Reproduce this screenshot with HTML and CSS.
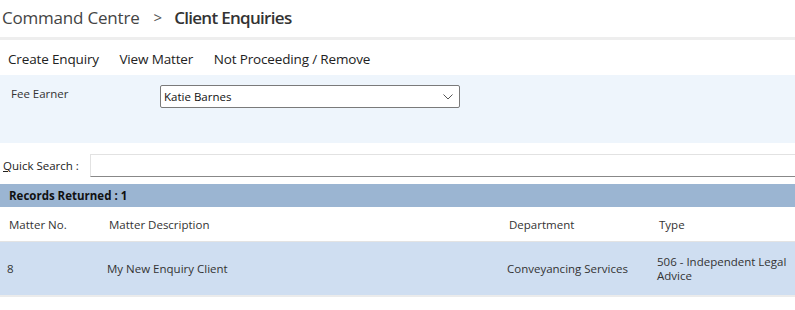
FILE: index.html
```html
<!DOCTYPE html>
<html lang="en">
<head>
    <meta charset="UTF-8">
    <meta name="viewport" content="width=device-width, initial-scale=1.0">
    <title>Client Enquiries</title>
    <link rel="stylesheet" href="styles.css">
</head>
<body>
    <div class="breadcrumb">
        <span class="crumb">Command Centre</span>
        <span class="sep">&gt;</span>
        <span class="current">Client Enquiries</span>
    </div>

    <div class="toolbar">
        <span class="tool">Create Enquiry</span>
        <span class="tool">View Matter</span>
        <span class="tool">Not Proceeding / Remove</span>
    </div>

    <div class="filters">
        <label class="filter-label">Fee Earner</label>
        <div class="select">
            <span>Katie Barnes</span>
            <svg class="chevron" width="10" height="6" viewBox="0 0 10 6">
                <path d="M0.5 0.5 L5 5 L9.5 0.5" fill="none" stroke="#555" stroke-width="1"/>
            </svg>
        </div>
    </div>

    <div class="search">
        <label class="search-label"><u>Q</u>uick Search :</label>
        <div class="search-box"></div>
    </div>

    <div class="records">Records Returned : 1</div>

    <div class="grid">
        <div class="row head">
            <div class="cell">Matter No.</div>
            <div class="cell">Matter Description</div>
            <div class="cell">Department</div>
            <div class="cell">Type</div>
        </div>
        <div class="row item">
            <div class="cell">8</div>
            <div class="cell">My New Enquiry Client</div>
            <div class="cell">Conveyancing Services</div>
            <div class="cell">506 - Independent Legal Advice</div>
        </div>
    </div>
</body>
</html>
```

FILE: styles.css
```css
* {
    margin: 0;
    padding: 0;
    box-sizing: border-box;
}

body {
    font-family: "Open Sans", "Noto Sans", sans-serif;
    color: #333;
    background-color: white;
    width: 795px;
    overflow: hidden;
}

.breadcrumb {
    height: 40px;
    padding-left: 2px;
    padding-bottom: 3px;
    display: flex;
    align-items: center;
    font-size: 17px;
    border-bottom: 3px solid #eeeeee;
}

.crumb {
    color: #444;
    letter-spacing: -0.2px;
}

.sep {
    color: #555;
    margin: 0 12px 0 14px;
    font-size: 15px;
}

.current {
    font-weight: 600;
    color: #333;
    letter-spacing: -0.7px;
}

.toolbar {
    height: 35px;
    display: flex;
    align-items: center;
    gap: 20.5px;
    padding-left: 8px;
    padding-top: 3px;
    font-size: 13.5px;
    letter-spacing: -0.15px;
    color: #222;
}

.filters {
    height: 68px;
    background-color: #eef5fc;
    display: flex;
    align-items: flex-start;
    padding-top: 10px;
}

.filter-label {
    width: 160px;
    padding-left: 11px;
    font-size: 11.5px;
    padding-top: 1px;
}

.select {
    width: 300px;
    height: 23px;
    background-color: white;
    border: 1px solid #7a7a7a;
    border-radius: 2px;
    display: flex;
    align-items: center;
    justify-content: space-between;
    padding: 0 6px 0 3px;
    font-size: 11.5px;
    color: #111;
}

.search {
    display: flex;
    align-items: center;
    padding: 11px 0 7px 0;
    height: 41px;
}

.search-label {
    width: 90px;
    padding-left: 3px;
    font-size: 11.5px;
    color: #222;
}

.search-box {
    flex: 1;
    height: 23px;
    border: 1px solid #e2e2e2;
    border-bottom: 1px solid #888;
    border-right: none;
}

.records {
    height: 23px;
    background-color: #9bb5d2;
    font-size: 11.5px;
    font-weight: 700;
    color: #111;
    padding-left: 9px;
    display: flex;
    align-items: center;
}

.row {
    display: grid;
    grid-template-columns: 100px 400px 150px 1fr;
    font-size: 11.5px;
}

.head {
    height: 35px;
    align-items: center;
    border-bottom: 1px solid #e3e3e3;
}

.head .cell {
    padding-left: 9px;
}

.item {
    height: 55px;
    align-items: center;
    background-color: #cfdef1;
    border-bottom: 2px solid #ebebeb;
    line-height: 14px;
}

.item .cell {
    padding-left: 7px;
    padding-right: 6px;
}
```
